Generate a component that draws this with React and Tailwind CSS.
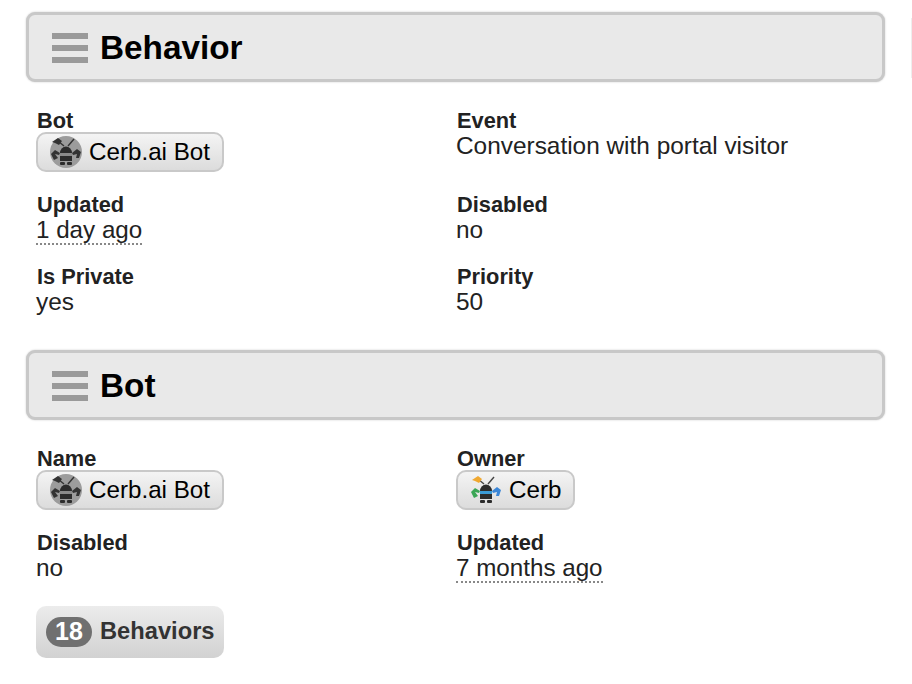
const BotIcon = ({ color = false }) => (
  <svg width="32" height="32" viewBox="0 0 32 32" className="shrink-0">
    {!color && <circle cx="16" cy="16" r="16" fill="#9c9c9c" />}
    <path d="M14 10 L8 5" stroke={color ? "#444" : "#333"} strokeWidth="1.4" />
    <path d="M18 10 L24 3" stroke={color ? "#444" : "#333"} strokeWidth="1.4" />
    <path d="M2 6 L8 2 L12 5 L9 9 L5 7 Z" fill={color ? "#f0a830" : "#333"} />
    <path d="M1 18 L5 14 L10 17 L9 19 L5 18 L8 22 L4 24 Z" fill={color ? "#3aa655" : "#333"} />
    <path d="M31 16 L27 13 L22 17 L23 19 L27 18 L26 22 L29 22 Z" fill={color ? "#3b86d6" : "#333"} />
    <path d="M10 17 A6 6.5 0 0 1 22 17 L22 25 L10 25 Z" fill="#2c2c2c" />
    <rect x="10" y="17" width="12" height="3" fill={color ? "#3b9bd6" : "#8a8a8a"} />
    <rect x="10" y="26" width="5" height="3" rx="1" fill="#2c2c2c" />
    <rect x="17" y="26" width="5" height="3" rx="1" fill="#2c2c2c" />
  </svg>
);

const Header = ({ title }) => (
  <div className="flex items-center h-[70px] pl-[23px] border-[3px] border-[#c8c8c8] rounded-[9px] bg-[#e9e9e9] shadow-[0_0_2px_#c8c8c8]">
    <div className="flex flex-col gap-[6px] w-[36px] mt-[1px] mr-[12px]">
      <div className="h-[6px] bg-[#9a9a9a]" />
      <div className="h-[6px] bg-[#9a9a9a]" />
      <div className="h-[6px] bg-[#9a9a9a]" />
    </div>
    <h2 className="pt-[2px] text-[33.3px] font-bold text-black leading-none">{title}</h2>
  </div>
);

const Chip = ({ label, color }) => (
  <div className="inline-flex items-center gap-[7px] h-[40px] mt-[-2px] pl-[12px] pr-[12px] border-2 border-[#c9c9c9] rounded-[10px] bg-gradient-to-b from-[#f4f4f4] to-[#dcdcdc] text-[24.2px] text-black">
    <BotIcon color={color} />
    <span>{label}</span>
  </div>
);

const Field = ({ label, className = "", children }) => (
  <div className={className}>
    <div className="ml-[1px] text-[21.8px] leading-[26px] font-bold text-[#222]">{label}</div>
    {children}
  </div>
);

const Value = ({ children }) => <div className="mt-[-1px] text-[24.4px] leading-[26px] text-[#222]">{children}</div>;

const Dotted = ({ children }) => (
  <span className="inline-block mt-[-1px] text-[24.2px] leading-[26px] text-[#222] border-b-2 border-dotted border-[#888]">{children}</span>
);

export default function App() {
  return (
    <div className="relative w-[912px] h-[684px] overflow-hidden bg-white pt-[12px] pl-[26px] pr-[27px] font-['Liberation_Sans',Arial,sans-serif]">
      <Header title="Behavior" />
      <div className="grid grid-cols-[420px_1fr] pl-[10px] pt-[26px] mb-[35px]">
        <Field label="Bot" className="h-[84px]"><Chip label="Cerb.ai Bot" /></Field>
        <Field label="Event" className="h-[84px]"><Value>Conversation with portal visitor</Value></Field>
        <Field label="Updated" className="h-[72px]"><Dotted>1 day ago</Dotted></Field>
        <Field label="Disabled" className="h-[72px]"><Value>no</Value></Field>
        <Field label="Is Private"><Value>yes</Value></Field>
        <Field label="Priority"><Value>50</Value></Field>
      </div>
      <Header title="Bot" />
      <div className="grid grid-cols-[420px_1fr] pl-[10px] pt-[26px]">
        <Field label="Name" className="h-[84px]"><Chip label="Cerb.ai Bot" /></Field>
        <Field label="Owner" className="h-[84px]"><Chip label="Cerb" color /></Field>
        <Field label="Disabled" className="h-[72px]"><Value>no</Value></Field>
        <Field label="Updated" className="h-[72px]"><Dotted>7 months ago</Dotted></Field>
      </div>
      <div className="pl-[10px] mt-[4px]">
        <div className="inline-flex items-center gap-[8px] h-[52px] w-[188px] pl-[10px] rounded-[10px] bg-gradient-to-b from-[#ececec] to-[#d2d2d2]">
          <span className="flex items-center justify-center w-[46px] h-[30px] rounded-full bg-[#707070] text-white text-[25px] font-bold">18</span>
          <span className="text-[23.7px] font-bold text-[#333]">Behaviors</span>
        </div>
      </div>
      <div className="absolute right-0 top-[18px] w-px h-[60px] bg-[#eeeeee]" />
    </div>
  );
}
